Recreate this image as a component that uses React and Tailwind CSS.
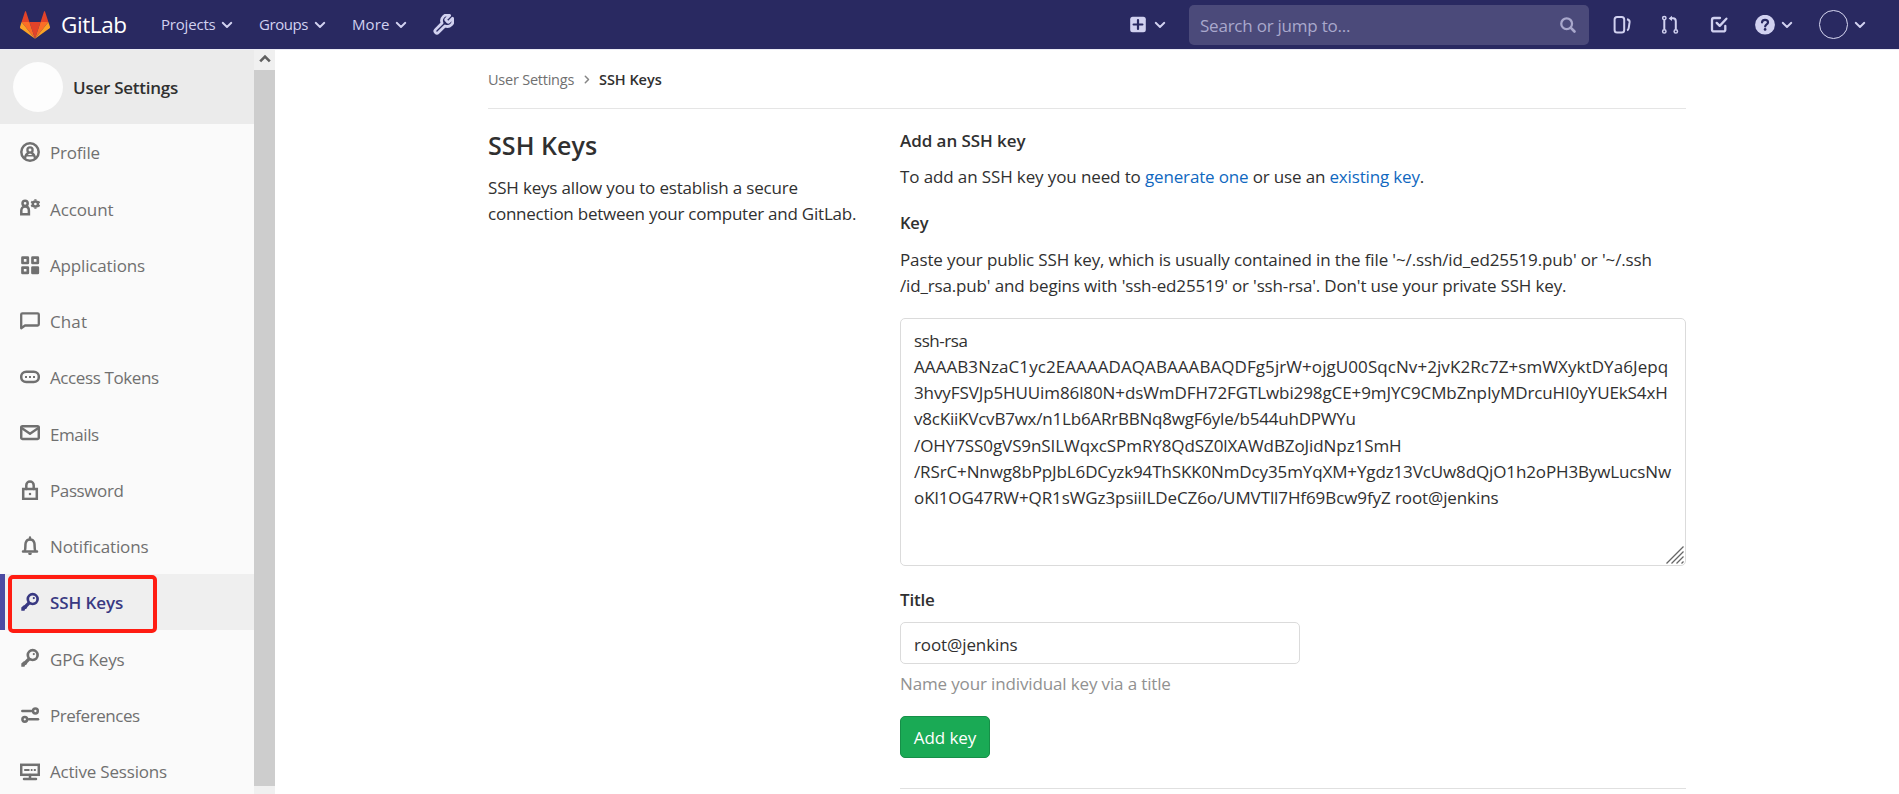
import React from 'react';

const Svg = ({ children, className = '', size = 20, box = '0 0 20 20' }) => (
  <svg
    width={size}
    height={size}
    viewBox={box}
    fill="none"
    stroke="currentColor"
    strokeWidth="2.3"
    strokeLinecap="round"
    strokeLinejoin="round"
    className={`shrink-0 ${className}`}
  >
    {children}
  </svg>
);

const Chevron = ({ className = '' }) => (
  <Svg size={16} box="0 0 16 16" className={className}>
    <path d="M3.7 5.8 8 10l4.300-4.200" strokeWidth="1.9" />
  </Svg>
);

const Logo = () => (
  <svg width="30" height="28" viewBox="0 0 30 28" className="shrink-0">
    <path fill="#e24329" d="M15 27.8 20.6 11H9.4z" />
    <path fill="#fc6d26" d="M15 27.8 9.4 11H1.6z" />
    <path fill="#fca326" d="M1.6 11 0 16a1.2 1.2 0 0 0 .4 1.3L15 27.8z" />
    <path fill="#e24329" d="M1.6 11h7.8L6 .5c-.2-.5-.9-.5-1 0z" />
    <path fill="#fc6d26" d="M15 27.8 20.6 11h7.8z" />
    <path fill="#fca326" d="m28.4 11 1.6 5a1.2 1.2 0 0 1-.4 1.3L15 27.8z" />
    <path fill="#e24329" d="M28.4 11h-7.8L24 .5c.2-.5.9-.5 1 0z" />
  </svg>
);

const KeyIcon = () => (
  <Svg>
    <circle cx="12.7" cy="7.1" r="4.900" strokeWidth="2.700" />
    <circle cx="13.800" cy="6.100" r="1.100" fill="currentColor" stroke="none" />
    <path d="m9 11-6 6" strokeWidth="3.200" strokeLinecap="butt" />
    <path d="M1.300 18.800v-3.400l2.600-2.200 3.400 2-1.200 1.900H4.600v1.700z" fill="currentColor" stroke="none" />
  </Svg>
);

const ICONS = {
  profile: (
    <Svg>
      <circle cx="10" cy="10" r="8.700" strokeWidth="2.500" />
      <circle cx="10" cy="8" r="2.600" strokeWidth="2.300" />
      <path d="M4.900 16.400c.4-3 1.600-4.600 3.300-5.200M15.100 16.400c-.4-3-1.600-4.600-3.300-5.200" strokeWidth="2.300" />
      <path d="M6.500 13.800h7" strokeWidth="1.600" />
    </Svg>
  ),
  account: (
    <Svg>
      <circle cx="5.100" cy="5.300" r="2.600" strokeWidth="2.500" />
      <path d="M1.300 16.300v-3.500c0-2.600 1.300-4.200 3.800-4.200s3.800 1.600 3.800 4.200v3.500z" strokeLinejoin="miter" strokeWidth="2.500" />
      <circle cx="15.400" cy="6" r="2.600" strokeWidth="2.500" />
      <path d="M15.400 1.200v1.400M15.400 9.400v1.400M11.200 3.600l1.200.7M18.400 7.700l1.200.7M11.200 8.400l1.200-.7M18.400 4.300l1.200-.7" strokeWidth="2.200" strokeLinecap="butt" />
    </Svg>
  ),
  applications: (
    <Svg>
      <rect x="2.500" y="2.700" width="5.300" height="5.300" strokeWidth="2.700" />
      <rect x="12.500" y="2.700" width="5.300" height="5.300" strokeWidth="2.700" />
      <rect x="2.500" y="12.600" width="5.300" height="5.300" strokeWidth="2.700" />
      <rect x="12.500" y="12.600" width="5.300" height="5.300" strokeWidth="2.700" fill="currentColor" />
    </Svg>
  ),
  chat: (
    <Svg>
      <path d="M1.200 17.200V3.500c0-.8.500-1.200 1.200-1.200h15.200c.8 0 1.200.500 1.200 1.200v9.800c0 .8-.5 1.200-1.200 1.200H5z" />
    </Svg>
  ),
  token: (
    <Svg>
      <rect x="1.200" y="4.700" width="17.600" height="10.400" rx="5" strokeWidth="2.500" />
      <path d="M5 9.900h2M9 9.900h2M13 9.900h2" strokeWidth="2" strokeLinecap="butt" />
    </Svg>
  ),
  mail: (
    <Svg>
      <rect x="1.200" y="3.300" width="17.600" height="12.600" rx="1.200" strokeWidth="2.500" />
      <path d="m2 5.200 8 5.600 8-5.600" />
    </Svg>
  ),
  lock: (
    <Svg>
      <rect x="3.200" y="9" width="13.600" height="9.900" strokeLinejoin="miter" strokeWidth="2.500" />
      <path d="M6.300 9V5.300a3.700 3.700 0 0 1 7.400 0V9" strokeWidth="2.500" />
      <rect x="8.900" y="12.900" width="2.200" height="2.200" fill="currentColor" stroke="none" />
    </Svg>
  ),
  bell: (
    <Svg>
      <path d="M4.800 14.700c1-2 .2-5.300.9-8 .5-2 2.200-3.300 4.300-3.300s3.800 1.300 4.300 3.300c.7 2.700-.1 6 .9 8M3 15.600h14" strokeWidth="2.500" />
      <path d="M10 1.300v2M9.300 17.800h1.400" />
    </Svg>
  ),
  key: <KeyIcon />,
  preferences: (
    <Svg>
      <circle cx="15.400" cy="6" r="2.400" strokeWidth="2.500" />
      <path d="M2.300 6h9" strokeWidth="2.500" />
      <circle cx="4.800" cy="14.300" r="2.400" strokeWidth="2.500" />
      <path d="M9 14.300h9" strokeWidth="2.500" />
    </Svg>
  ),
  sessions: (
    <Svg>
      <rect x="1.200" y="3.800" width="17.600" height="10" strokeLinejoin="miter" strokeWidth="2.500" />
      <path d="M4.200 8.900h5.300M10.800 8.900h1.700M13.800 8.900h2" strokeWidth="2" strokeLinecap="butt" />
      <path d="M10 14v3.500M4 18h12" strokeWidth="2.500" />
    </Svg>
  ),
};

const ITEMS = [
  ['profile', 'Profile', 'tracking-[-0.2px]'],
  ['account', 'Account', 'tracking-[-0.1px]'],
  ['applications', 'Applications', 'tracking-[-0.157px]'],
  ['chat', 'Chat', 'tracking-[0.1px]'],
  ['token', 'Access Tokens', 'tracking-[-0.391px]'],
  ['mail', 'Emails', 'tracking-[-0.44px]'],
  ['lock', 'Password', 'tracking-[-0.389px]'],
  ['bell', 'Notifications', 'tracking-[-0.123px]'],
  ['key', 'SSH Keys', 'tracking-[-0.089px]', true],
  ['key', 'GPG Keys', 'tracking-[-0.19px]'],
  ['preferences', 'Preferences', 'tracking-[-0.459px]'],
  ['sessions', 'Active Sessions', 'tracking-[-0.194px]'],
];

const KEY_LINES = [
  ['ssh-rsa', 'tracking-[-0.441px]'],
  ['AAAAB3NzaC1yc2EAAAADAQABAAABAQDFg5jrW+ojgU00SqcNv+2jvK2Rc7Z+smWXyktDYa6Jepq', 'tracking-[0.072px]'],
  ['3hvyFSVJp5HUUim86l80N+dsWmDFH72FGTLwbi298gCE+9mJYC9CMbZnpIyMDrcuHI0yYUEkS4xH', 'tracking-[-0.099px]'],
  ['v8cKiiKVcvB7wx/n1Lb6ARrBBNq8wgF6yle/b544uhDPWYu', 'tracking-[-0.214px]'],
  ['/OHY7SS0gVS9nSILWqxcSPmRY8QdSZ0lXAWdBZoJidNpz1SmH', 'tracking-[-0.082px]'],
  ['/RSrC+Nnwg8bPpJbL6DCyzk94ThSKK0NmDcy35mYqXM+Ygdz13VcUw8dQjO1h2oPH3BywLucsNw', 'tracking-[-0.124px]'],
  ['oKl1OG47RW+QR1sWGz3psiiILDeCZ6o/UMVTll7Hf69Bcw9fyZ root@jenkins', 'tracking-[-0.093px]'],
];

function Header() {
  return (
    <header className="flex h-[50px] shrink-0 items-center border-b border-[#ececf5] bg-[#292961] pl-5 text-[#d1d1f0]">
      <div className="flex h-[28px] items-center">
        <Logo />
      </div>
      <div className="ml-[11px] w-[100px] text-[22.5px] tracking-[-0.4px] text-white">GitLab</div>
      <div className="w-[58px] pb-[2px] text-[15px] tracking-[-0.19px]">Projects</div>
      <Chevron />
      <div className="ml-[24px] w-[53px] pb-[2px] text-[15px] tracking-[-0.45px]">Groups</div>
      <Chevron />
      <div className="ml-[24px] w-[41px] pb-[2px] text-[15px] tracking-[0.1px]">More</div>
      <Chevron />
      <Svg size={21} box="1 1 22 22" className="ml-[24px]">
        <path
          strokeWidth="2.9"
          d="M14.7 6.3a1 1 0 0 0 0 1.4l1.6 1.6a1 1 0 0 0 1.4 0l3.77-3.77a6 6 0 0 1-7.94 7.94l-6.91 6.91a2.12 2.12 0 0 1-3-3l6.91-6.91a6 6 0 0 1 7.94-7.94l-3.76 3.76z"
        />
      </Svg>

      <div className="ml-auto flex items-center pr-[31px]">
        <Svg>
          <rect x="2.200" y="1.700" width="15.600" height="15.600" rx="2.500" fill="currentColor" stroke="none" />
          <path d="M10 5.100v8.800M5.600 9.500h8.800" stroke="#292961" strokeWidth="2.200" />
        </Svg>
        <Chevron className="ml-1" />
        <div className="ml-[21px] flex h-10 w-[400px] items-center justify-between rounded-[5px] bg-[#4b4a7a] pr-[12px] pl-[11px] text-[#a9a8cc]">
          <span className="pt-[2px] text-[17px] tracking-[-0.228px]">Search or jump to...</span>
          <Svg size={18}>
            <circle cx="8.500" cy="8.500" r="6" strokeWidth="2.500" />
            <path d="m13.200 13.200 4 4" strokeWidth="3" />
          </Svg>
        </div>
        <Svg className="ml-[23px]">
          <rect x="2.600" y="1.900" width="9.600" height="15.600" rx="2.500" strokeWidth="2" />
          <path d="M15 4.200c2 .4 2.800 1.300 2.600 3l-.9 6c-.2 1.200-.7 1.900-1.700 2.200" strokeWidth="2" strokeLinecap="butt" />
        </Svg>
        <Svg className="ml-[28px]">
          <circle cx="4.300" cy="3.100" r="1.700" strokeWidth="1.500" />
          <circle cx="4.300" cy="16.400" r="1.700" strokeWidth="1.500" />
          <circle cx="15.800" cy="16.400" r="1.700" strokeWidth="1.500" />
          <path d="M4.300 4.900v9.600M15.800 14.500V6.200c0-1.800-1-2.900-2.800-2.900h-1.800" strokeWidth="2" strokeLinecap="butt" />
          <path d="M8.600 3.400 12 .7v5.400z" fill="currentColor" stroke="none" />
        </Svg>
        <Svg className="ml-[29px]">
          <path d="M11 3H5c-1.200 0-2 .8-2 2v9.400c0 1.200.8 2 2 2h9.300c1.200 0 2-.8 2-2v-3.500" strokeWidth="2.300" />
          <path d="m7.700 7.900 3 3 6.700-7.200" strokeWidth="2.300" />
        </Svg>
        <Svg className="ml-[26px]">
          <circle cx="10" cy="9.700" r="9.900" fill="currentColor" stroke="none" />
          <path d="M7 7.400C7.200 5.700 8.300 4.900 10 4.900s3 1 3 2.500c0 1.900-2.800 2-2.800 4" stroke="#292961" strokeWidth="2.200" />
          <circle cx="10.100" cy="14.400" r="1.350" fill="#292961" stroke="none" />
        </Svg>
        <Chevron className="ml-[4px]" />
        <div className="ml-[24px] h-[29px] w-[29px] rounded-full border border-[#d8d8f2]" />
        <Chevron className="ml-[4px]" />
      </div>
    </header>
  );
}

function Sidebar() {
  return (
    <aside className="flex w-[275px] shrink-0 overflow-hidden">
      <div className="relative w-[254px] bg-[#fafafa]">
        <div className="flex h-[74px] items-center bg-[#ebebeb] pl-[13px]">
          <div className="h-[50px] w-[50px] rounded-full bg-[#fdfdfd]" />
          <div className="ml-[10px] pt-[2px] text-[17px] font-semibold tracking-[-0.25px] text-[#303030]">User Settings</div>
        </div>
        <nav>
          {ITEMS.map(([icon, label, tracking, active]) => (
            <a
              key={label}
              className={
                active
                  ? 'flex h-[56.25px] items-start border-l-[5px] border-[#4b4ba3] bg-[#efefef] pt-[18px] pl-[15px] font-semibold text-[#393982]'
                  : 'flex h-[56.25px] items-start pt-[18px] pl-5 text-[#707070]'
              }
            >
              {ICONS[icon]}
              <span className={`-mt-[0.6px] ml-[10px] text-[17px] leading-6 ${tracking}`}>{label}</span>
            </a>
          ))}
        </nav>
        <div className="absolute top-[525px] left-[8px] h-[58px] w-[149px] rounded-[5px] border-4 border-[#ff1c12]" />
      </div>
      <div className="flex w-[21px] flex-col bg-[#f0f0f0]">
        <div className="flex h-5 items-center justify-center pb-[2px] text-[#606060]">
          <svg width="12" height="10" viewBox="0 0 12 10" fill="none" stroke="currentColor" strokeWidth="2.6">
            <path d="m1.200 7.300 4.800-4.800 4.800 4.800" />
          </svg>
        </div>
        <div className="h-[716px] bg-[#cdcdcd]" />
      </div>
    </aside>
  );
}

export default function App() {
  return (
    <div className="flex h-[794px] w-[1899px] flex-col overflow-hidden bg-white font-['Open_Sans','Noto_Sans',sans-serif] text-[17px] leading-[26px] whitespace-nowrap text-[#303030]">
      <Header />
      <div className="flex min-h-0 flex-1">
        <Sidebar />
        <main className="ml-[213px] w-[1198px]">
          <div className="flex h-[59px] items-center border-b border-[#e5e5e5] pt-[2px] text-[14.5px]">
            <span className="w-[96px] tracking-[-0.23px] text-[#707070]">User Settings</span>
            <Svg size={10} box="0 0 10 10" className="-ml-[2px] text-[#868686]">
              <path d="m3.300 1.300 3.200 3.200-3.200 3.200" strokeWidth="1.500" />
            </Svg>
            <span className="ml-[7px] font-semibold tracking-[-0.05px]">SSH Keys</span>
          </div>
          <div className="flex">
            <section className="w-[412px] shrink-0">
              <h1 className="mt-[19px] text-[25px] leading-[34px] font-semibold tracking-[0.07px]">SSH Keys</h1>
              <p className="mt-[13px] leading-[26.25px]">
                <span className="block tracking-[-0.175px]">SSH keys allow you to establish a secure</span>
                <span className="block tracking-[-0.235px]">connection between your computer and GitLab.</span>
              </p>
            </section>
            <section className="w-[786px]">
              <h2 className="mt-[19px] font-semibold tracking-[-0.06px]">Add an SSH key</h2>
              <p className="mt-[10px] tracking-[-0.16px]">
                <span className="tracking-[-0.12px]">To add an SSH key you need to </span>
                <a className="text-[#1068bf]">generate one</a> or use an <a className="text-[#1068bf]">existing key</a>.
              </p>
              <div className="mt-[20px] text-[16.5px] font-semibold tracking-[-0.2px]">Key</div>
              <p className="mt-[11px]">
                <span className="block tracking-[-0.13px]">
                  Paste your public SSH key, which is usually contained in the file '~/.ssh/id_ed25519.pub' or '~/.ssh
                </span>
                <span className="block tracking-[-0.156px]">
                  /id_rsa.pub' and begins with 'ssh-ed25519' or 'ssh-rsa'. Don't use your private SSH key.
                </span>
              </p>
              <div className="relative mt-[19px] h-[248px] w-[786px] rounded-[5px] border border-[#dbdbdb] pt-[8.600px] pl-[13px] leading-[26.25px]">
                {KEY_LINES.map(([line, tracking]) => (
                  <div key={line} className={tracking}>
                    {line}
                  </div>
                ))}
                <svg
                  width="18"
                  height="18"
                  viewBox="0 0 18 18"
                  className="absolute right-[1px] bottom-[1px]"
                  stroke="#666"
                  strokeWidth="1.3"
                >
                  <path d="M.5 17.500 17.500.500M5.500 17.500l12-12M10.500 17.500l7-7M15.500 17.500l2-2" />
                </svg>
              </div>
              <div className="mt-[21px] font-semibold tracking-[-0.2px]">Title</div>
              <div className="mt-[9px] flex h-[42px] w-[400px] items-center rounded-[5px] border border-[#dbdbdb] pt-[4px] pl-[13px] tracking-[-0.1px]">
                root@jenkins
              </div>
              <div className="mt-[7px] tracking-[-0.14px] text-[#919191]">Name your individual key via a title</div>
              <button className="mt-[19px] flex h-[42px] w-[90px] items-center justify-center rounded-[5px] border border-[#168f48] bg-[#1aaa55] pt-[2px] tracking-[-0.07px] text-white">
                Add key
              </button>
              <div className="mt-[30px] border-t border-[#e0e0e0]" />
            </section>
          </div>
        </main>
      </div>
    </div>
  );
}
